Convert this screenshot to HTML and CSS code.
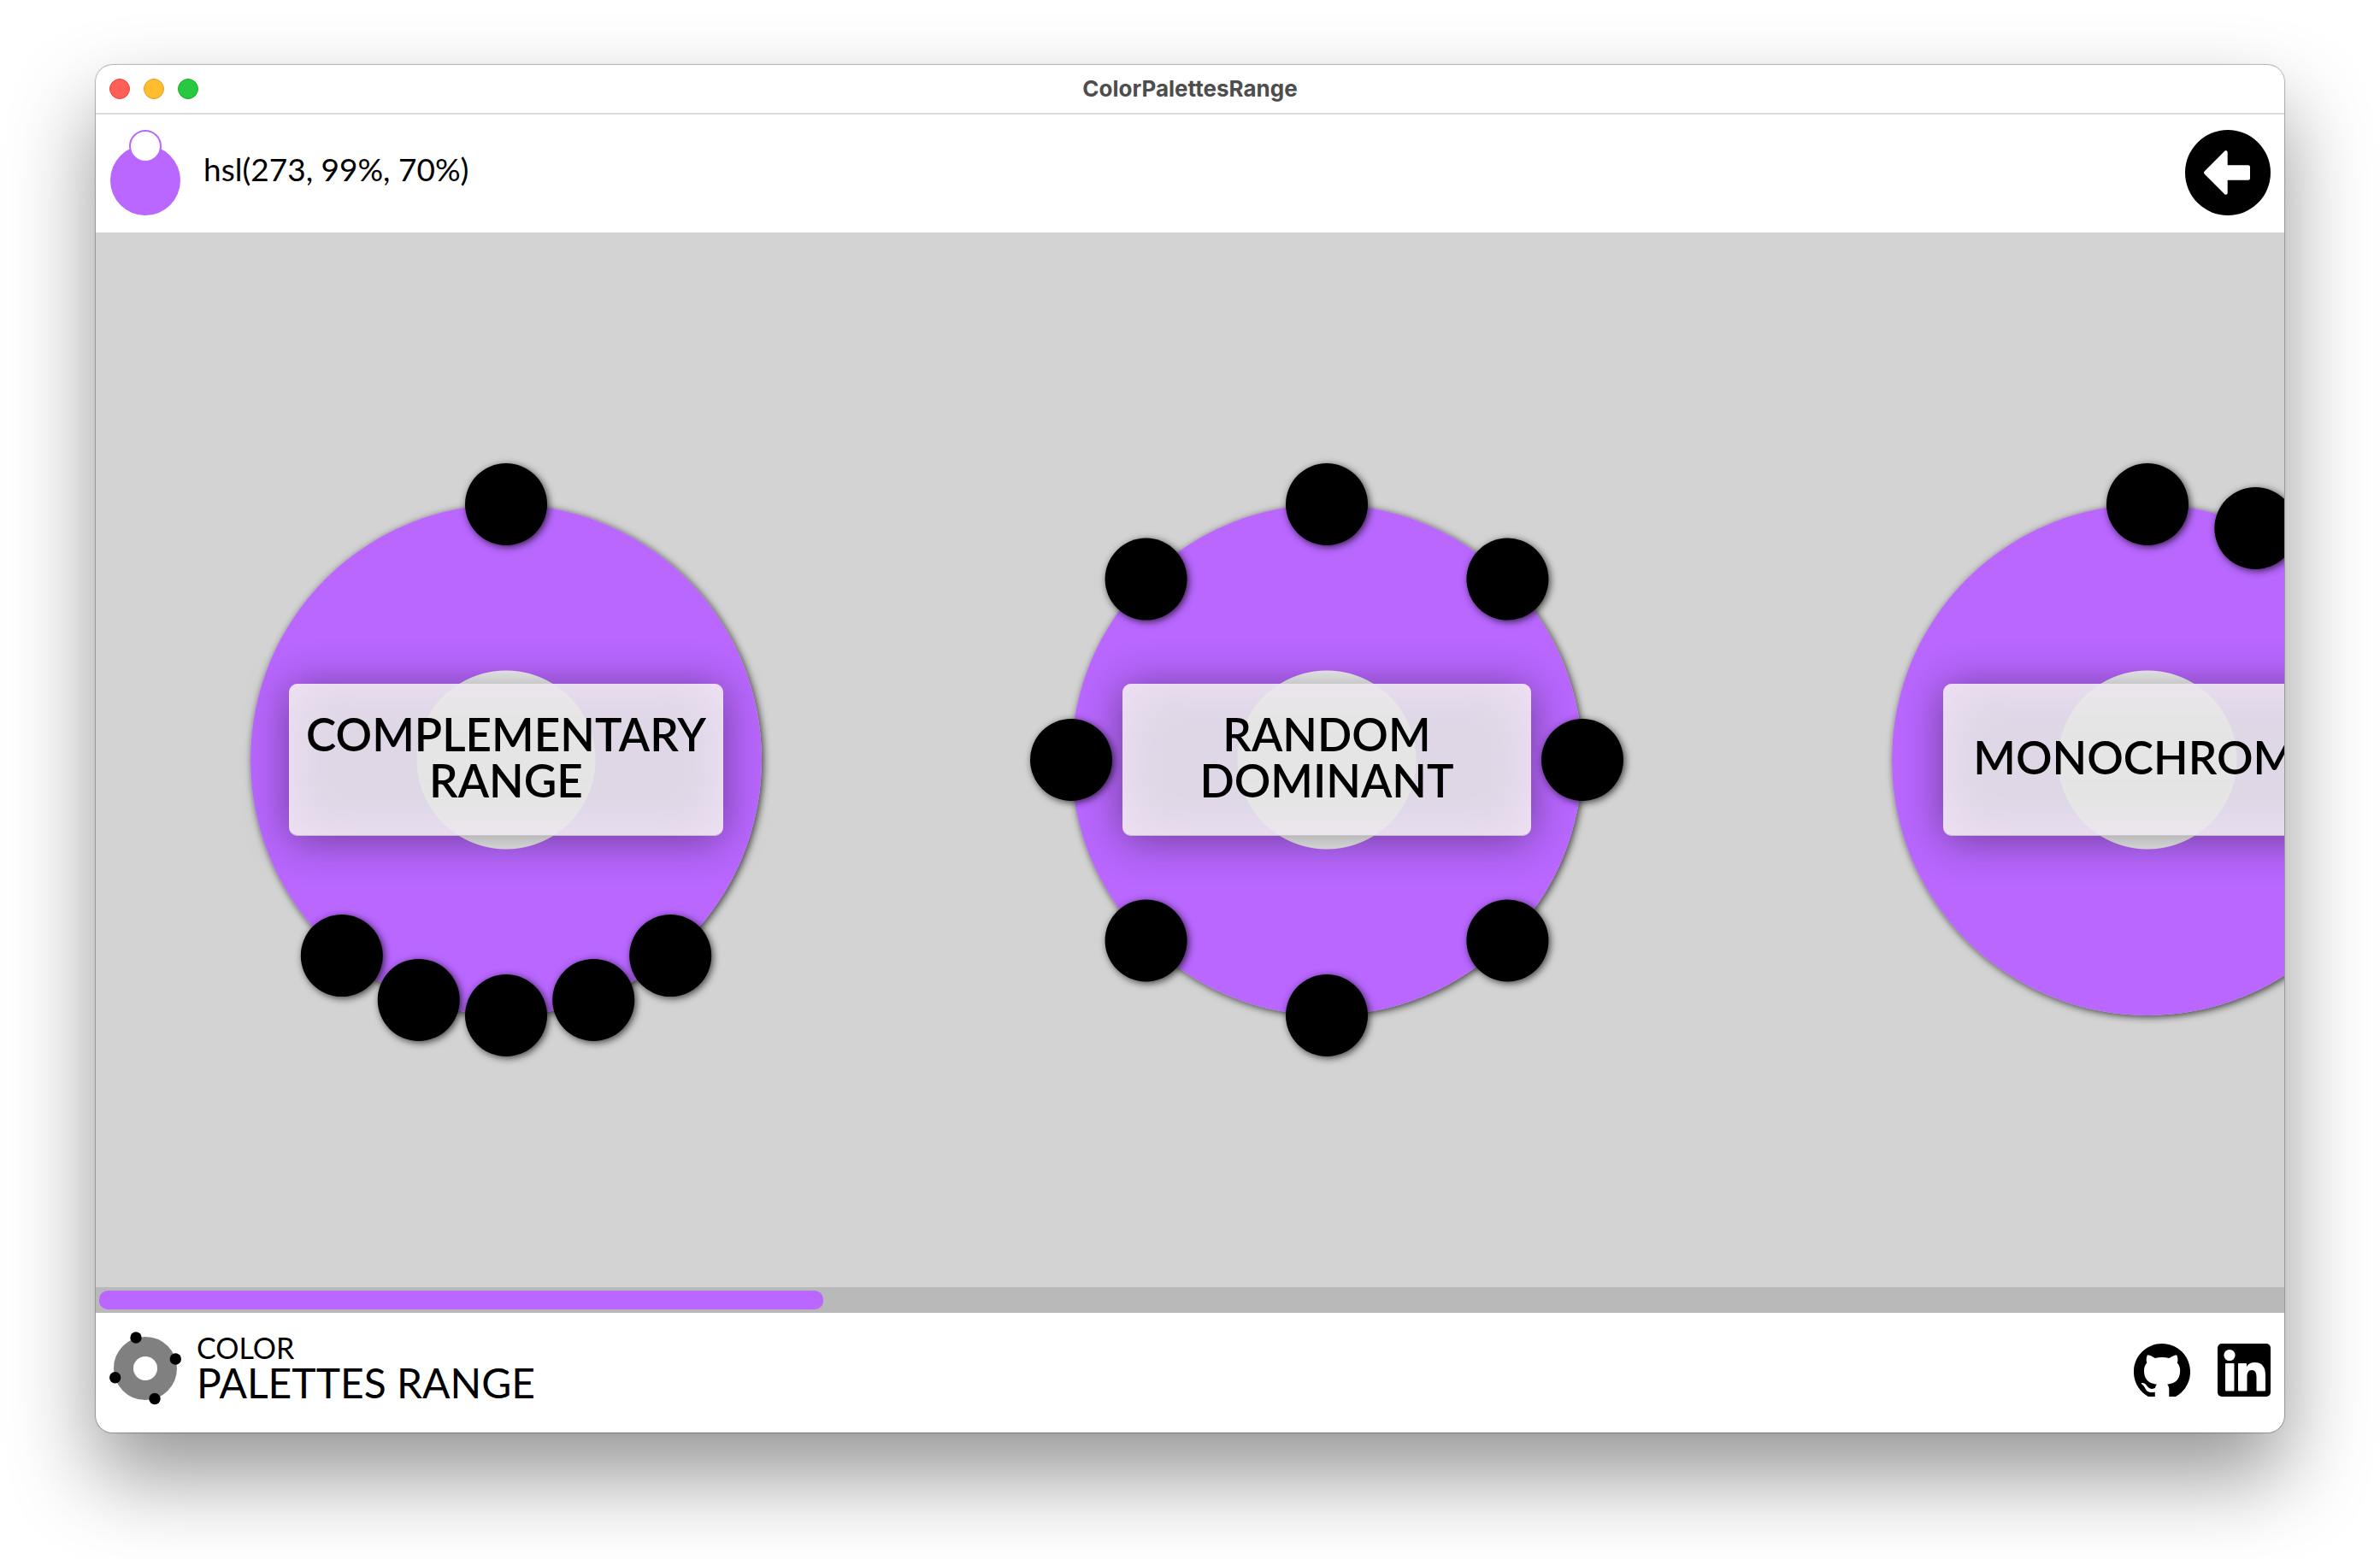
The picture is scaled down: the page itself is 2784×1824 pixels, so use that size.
FILE: index.html
```
<!DOCTYPE html>
<html lang="en">
<head>
<meta charset="utf-8">
<meta name="viewport" content="width=device-width, initial-scale=1">
<title>ColorPalettesRange</title>
<link rel="stylesheet" href="styles.css">
</head>
<body>
<div class="window">
  <div class="titlebar">
    <div class="lights">
      <button class="light light-close" aria-label="Close"></button>
      <button class="light light-minimize" aria-label="Minimize"></button>
      <button class="light light-zoom" aria-label="Zoom"></button>
    </div>
    <h1 class="window-title">ColorPalettesRange</h1>
  </div>

  <header class="header">
    <div class="current">
      <svg class="swatch" viewBox="0 0 84 100" aria-hidden="true">
        <circle cx="42" cy="59" r="41" fill="#b967ff"/>
        <circle cx="42" cy="19" r="18" fill="#fff" stroke="#b967ff" stroke-width="2"/>
      </svg>
      <span class="value">hsl(273, 99%, 70%)</span>
    </div>
    <button class="back" aria-label="Back">
      <svg viewBox="0 0 100 100" aria-hidden="true">
        <circle cx="50" cy="50" r="50"/>
        <path d="M24 50 47.700 26.200V43.300H74V56.700H47.700V73.800Z" fill="#fff" stroke="#fff" stroke-width="4" stroke-linejoin="round"/>
      </svg>
    </button>
  </header>

  <main class="gallery">
    <section class="slide">
      <div class="wheel">
        <i class="dot" style="--a:0deg"></i>
        <i class="dot" style="--a:140deg"></i>
        <i class="dot" style="--a:160deg"></i>
        <i class="dot" style="--a:180deg"></i>
        <i class="dot" style="--a:200deg"></i>
        <i class="dot" style="--a:220deg"></i>
        <button class="label">COMPLEMENTARY<br>RANGE</button>
      </div>
    </section>
    <section class="slide">
      <div class="wheel">
        <i class="dot" style="--a:0deg"></i>
        <i class="dot" style="--a:45deg"></i>
        <i class="dot" style="--a:90deg"></i>
        <i class="dot" style="--a:135deg"></i>
        <i class="dot" style="--a:180deg"></i>
        <i class="dot" style="--a:225deg"></i>
        <i class="dot" style="--a:270deg"></i>
        <i class="dot" style="--a:315deg"></i>
        <button class="label">RANDOM<br>DOMINANT</button>
      </div>
    </section>
    <section class="slide">
      <div class="wheel">
        <i class="dot" style="--a:0deg"></i>
        <i class="dot" style="--a:25deg"></i>
        <button class="label">MONOCHROME</button>
      </div>
    </section>
  </main>
  <div class="track"><div class="thumb"></div></div>

  <footer class="footer">
    <div class="brand">
      <svg class="logo" viewBox="0 0 84 100" aria-hidden="true">
        <circle cx="42" cy="48" r="25.500" fill="none" stroke="#808080" stroke-width="23"/>
        <circle cx="31" cy="12" r="6.700"/>
        <circle cx="77.300" cy="37" r="6.700"/>
        <circle cx="6.700" cy="58.700" r="6.700"/>
        <circle cx="53" cy="83.500" r="6.700"/>
      </svg>
      <div class="brand-text">
        <span class="brand-top">COLOR</span>
        <span class="brand-name">PALETTES RANGE</span>
      </div>
    </div>
    <nav class="links">
      <a class="github" href="#" aria-label="GitHub">
        <svg viewBox="0 0 16 15" preserveAspectRatio="xMidYMin slice" aria-hidden="true">
          <path d="M8 0C3.580 0 0 3.580 0 8c0 3.540 2.290 6.530 5.470 7.590.4.070.55-.17.55-.38 0-.19-.01-.82-.01-1.490-2.010.37-2.530-.49-2.690-.94-.09-.23-.48-.94-.82-1.130-.28-.15-.68-.52-.01-.53.63-.01 1.080.58 1.230.82.72 1.210 1.870.87 2.330.66.07-.52.28-.87.51-1.070-1.780-.2-3.640-.89-3.640-3.950 0-.87.31-1.590.82-2.150-.08-.2-.36-1.020.08-2.120 0 0 .67-.21 2.200.82.64-.18 1.320-.27 2-.27s1.360.09 2 .27c1.530-1.040 2.200-.82 2.200-.82.44 1.100.16 1.920.08 2.120.51.56.82 1.270.82 2.150 0 3.070-1.870 3.750-3.650 3.950.29.25.54.73.54 1.480 0 1.070-.01 1.930-.01 2.200 0 .21.15.46.55.38A8.010 8.010 0 0 0 16 8c0-4.420-3.580-8-8-8Z"/>
        </svg>
      </a>
      <a class="linkedin" href="#" aria-label="LinkedIn">
        <svg viewBox="0 0 62 62" aria-hidden="true">
          <rect width="62" height="62" rx="5"/>
          <g fill="#fff">
            <circle cx="14" cy="13.500" r="6.600"/>
            <rect x="9" y="23" width="10.500" height="32.500" rx="1"/>
            <path d="M25 23h8q1 0 1 1v3c2-3.200 5-5 9.500-5C52.500 22 56 28 56 37v17.500q0 1-1 1h-8.500q-1 0-1-1V39c0-5-1.500-8-5.500-8s-5.500 3.500-5.500 8v15.500q0 1-1 1H25q-1 0-1-1V24q0-1 1-1Z"/>
          </g>
        </svg>
      </a>
    </nav>
  </footer>
</div>
</body>
</html>
```
FILE: styles.css
```
* { box-sizing: border-box; }

body {
  margin: 0;
  min-height: 100vh;
  padding: 76px 112px 148px;
  display: flex;
  background: #fff;
  color: #000;
  font-family: Lato, "Open Sans", sans-serif;
}

button {
  padding: 0;
  border: 0;
  background: none;
  color: inherit;
  font: inherit;
}

svg { display: block; width: 100%; height: 100%; }

.window {
  flex: 1;
  min-width: 0;
  display: flex;
  flex-direction: column;
  overflow: hidden;
  border-radius: 20px;
  background: #fff;
  box-shadow: 0 0 0 1px rgba(0, 0, 0, .2), 0 0 3px rgba(0, 0, 0, .15), 0 50px 100px rgba(0, 0, 0, .42);
}

/* Title bar */
.titlebar {
  display: grid;
  grid-template-columns: 1fr auto 1fr;
  align-items: center;
  height: 58px;
  padding: 0 16px;
  border-bottom: 2px solid #dcdcdc;
}
.lights { display: flex; gap: 16px; }
.light { width: 24px; height: 24px; border: 1px solid; border-radius: 50%; }
.light-close { background: #ff5f57; border-color: #e14640; }
.light-minimize { background: #febc2e; border-color: #dfa023; }
.light-zoom { background: #28c840; border-color: #1dad2b; }
.window-title {
  margin: 0;
  color: #4d4d4d;
  font: 700 26px/32px Inter, sans-serif;
}

/* Current colour */
.header {
  display: flex;
  align-items: center;
  justify-content: space-between;
  padding: 18px 16px 20px;
}
.current { display: flex; align-items: center; gap: 26px; }
.swatch { width: 84px; height: 100px; }
.value { padding-bottom: 8px; font-size: 37px; line-height: 44px; }
.back { width: 100px; height: 100px; }

/* Palette wheels */
.gallery {
  flex: 1;
  display: flex;
  overflow: hidden;
  background: #d3d3d3;
}
.slide {
  flex: 0 0 960px;
  display: flex;
  align-items: center;
  justify-content: center;
}
.wheel {
  position: relative;
  flex: none;
  display: flex;
  align-items: center;
  justify-content: center;
  width: 598px;
  height: 598px;
  border-radius: 50%;
  background: radial-gradient(circle, #f5f5f5 104px, #b967ff 105px);
  box-shadow: 2px 2px 8px rgba(0, 0, 0, .7);
}
.dot {
  position: absolute;
  top: calc(50% - 48px);
  left: calc(50% - 48px);
  width: 96px;
  height: 96px;
  border-radius: 50%;
  background: #000;
  box-shadow: 2px 2px 8px rgba(0, 0, 0, .7);
  transform: rotate(var(--a)) translateY(-299px) rotate(calc(-1 * var(--a)));
}
.label {
  flex: none;
  min-width: 478px;
  height: 178px;
  padding: 0 20px 6px;
  border-radius: 10px;
  background: rgba(227, 227, 227, .9);
  box-shadow: 0 4px 50px rgba(0, 0, 0, .42), inset 0 -1px rgba(0, 0, 0, .15), inset 0 0 60px rgba(250, 232, 255, .7);
  font-size: 53px;
  font-weight: 600;
  line-height: 54px;
}

/* Horizontal scroll bar */
.track { padding: 4px; background: #b9b9b9; }
.thumb { width: 33.2%; height: 22px; border-radius: 10px; background: #b967ff; }

/* Footer */
.footer {
  display: flex;
  align-items: center;
  justify-content: space-between;
  height: 140px;
  padding: 0 16px 6px;
}
.brand { display: flex; align-items: center; gap: 18px; }
.logo { width: 84px; height: 100px; }
.brand-text { display: flex; flex-direction: column; padding-bottom: 4px; }
.brand-top { font-size: 34px; line-height: 34px; }
.brand-name { font-size: 48px; line-height: 48px; }
.links { display: flex; align-items: center; gap: 32px; }
.links a { color: #000; height: 62px; }
.github { width: 66px; }
.linkedin { width: 62px; }
```
